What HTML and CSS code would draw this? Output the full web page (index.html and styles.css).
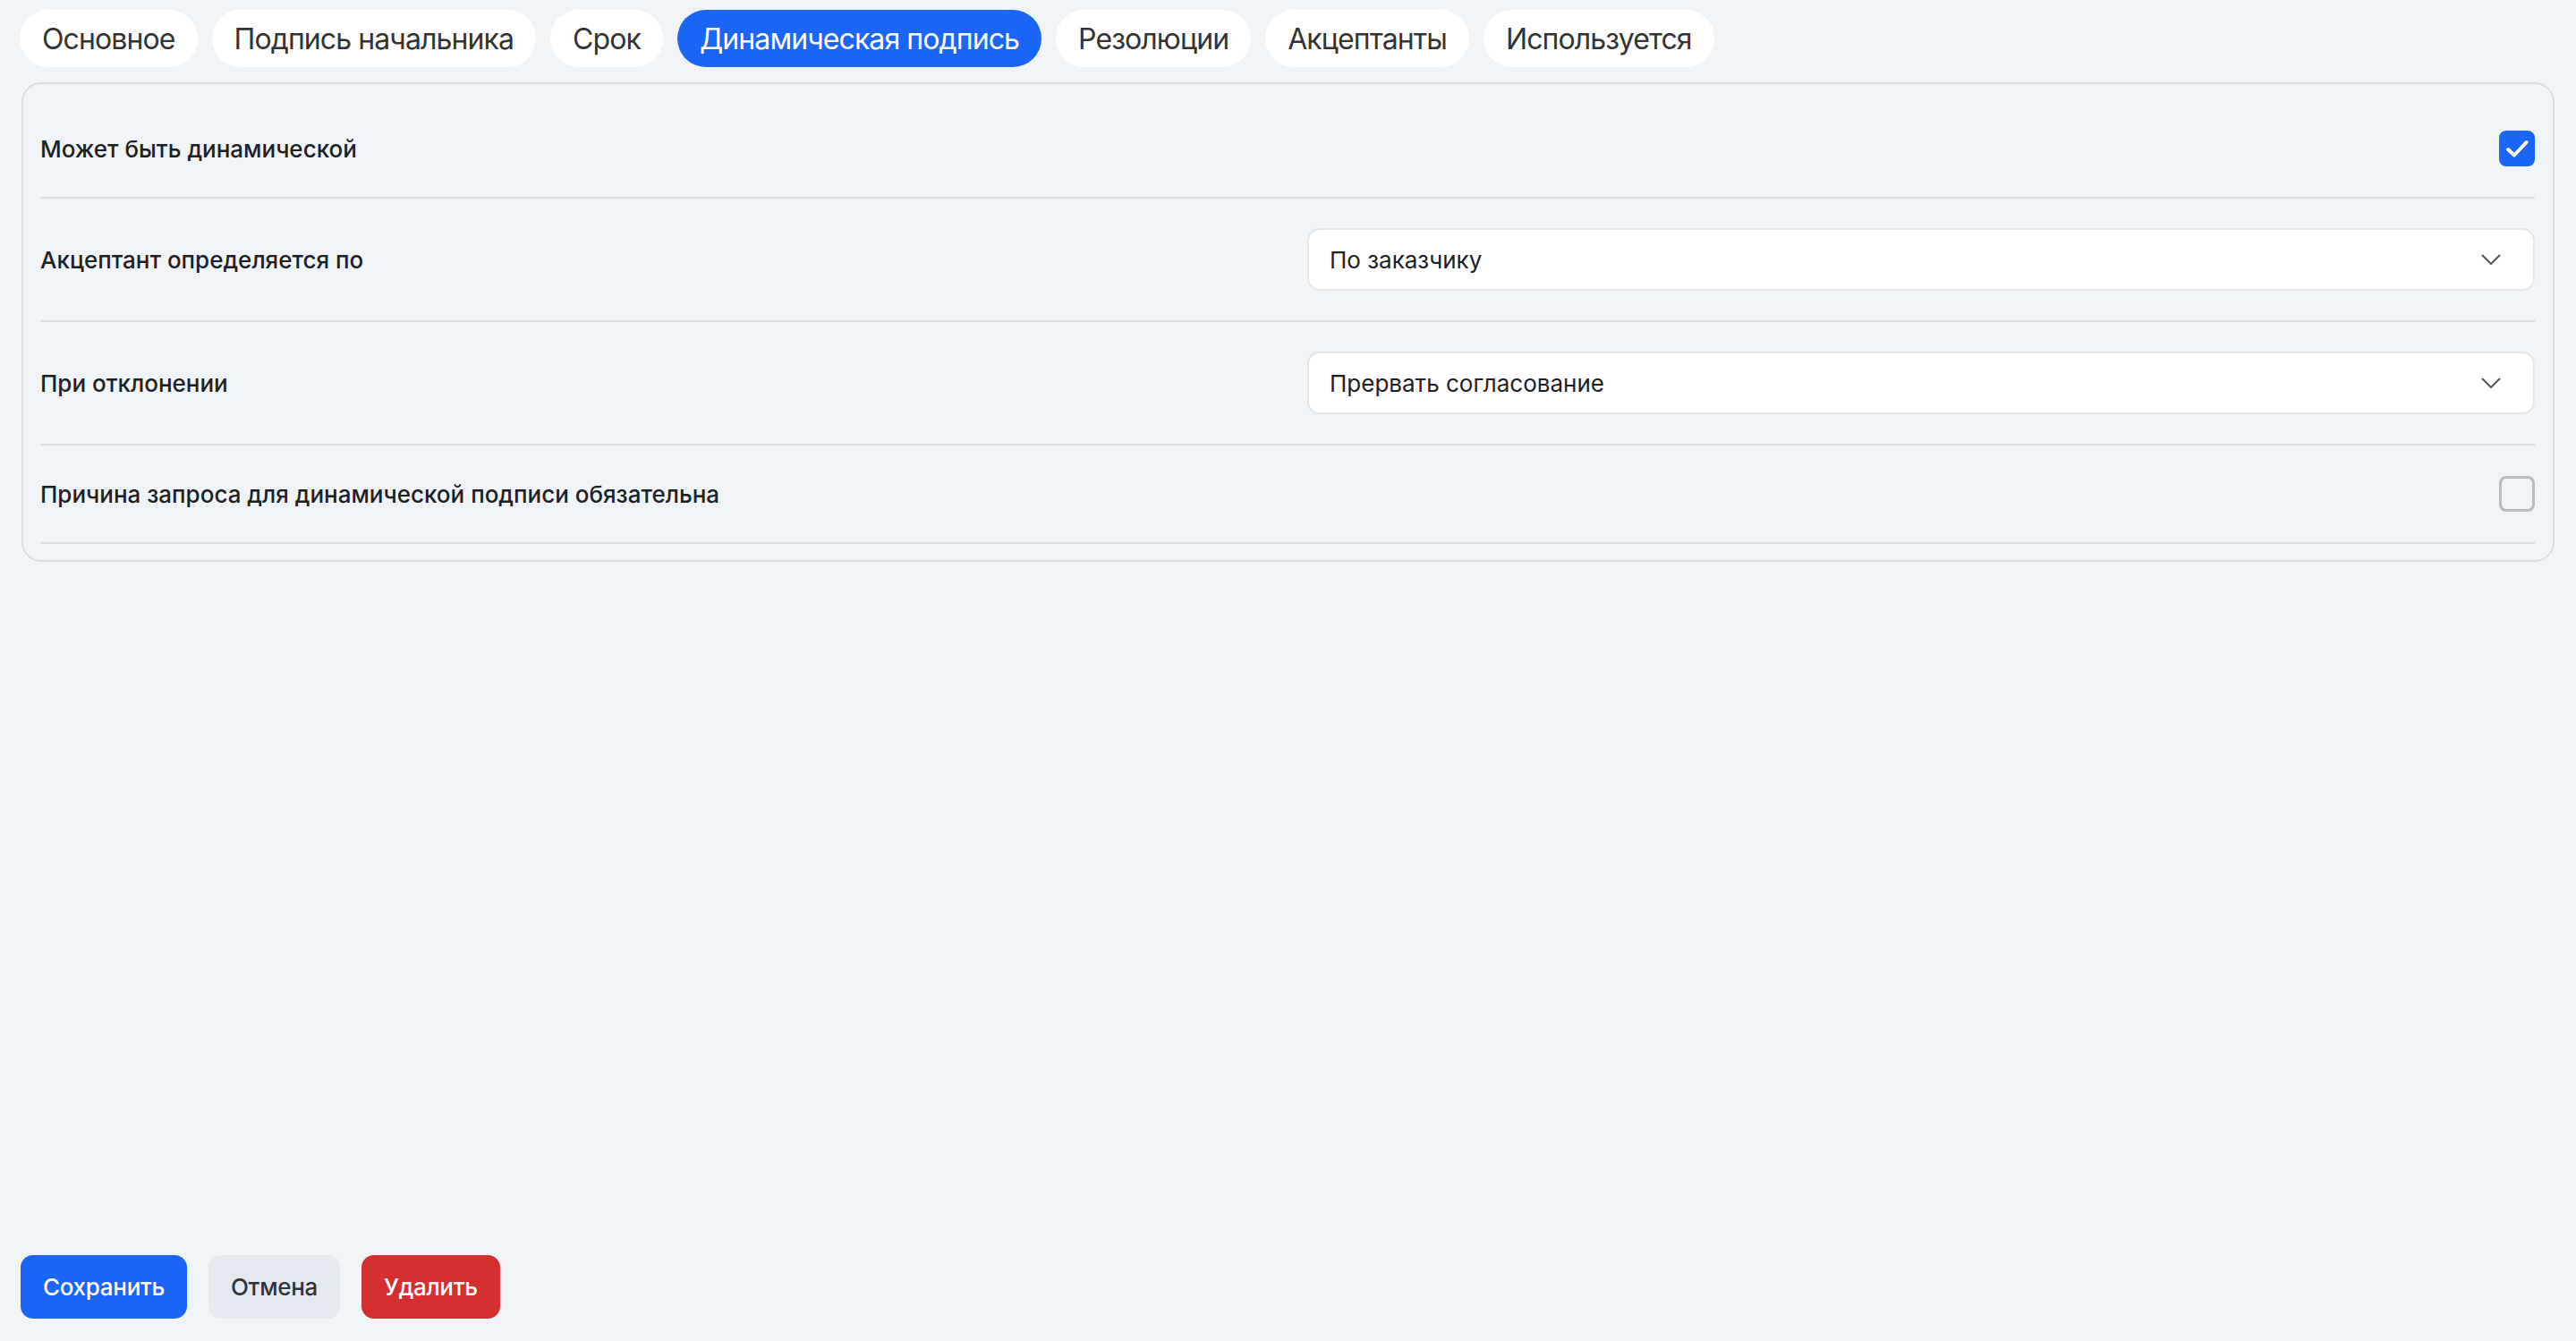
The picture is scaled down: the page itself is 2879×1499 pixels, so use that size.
FILE: index.html
```html
<!DOCTYPE html>
<html lang="ru">
<head>
<meta charset="utf-8">
<title>Динамическая подпись</title>
<link rel="stylesheet" href="styles.css">
</head>
<body>
<div class="page">
  <nav class="tabs">
    <button class="tab">Основное</button>
    <button class="tab">Подпись начальника</button>
    <button class="tab">Срок</button>
    <button class="tab tab--active">Динамическая подпись</button>
    <button class="tab">Резолюции</button>
    <button class="tab">Акцептанты</button>
    <button class="tab">Используется</button>
  </nav>

  <section class="panel">
    <div class="row row--check">
      <span class="label">Может быть динамической</span>
      <span class="checkbox checkbox--on">
        <svg viewBox="0 0 40 40" width="40" height="40"><path d="M10 21l7 6.5L30.5 13" fill="none" stroke="#fff" stroke-width="4" stroke-linecap="round" stroke-linejoin="round"/></svg>
      </span>
    </div>
    <div class="row">
      <span class="label">Акцептант определяется по</span>
      <div class="select">
        <span class="select__value">По заказчику</span>
        <svg class="select__chevron" viewBox="0 0 22 12" width="22" height="12"><path d="M1 1l10 10L21 1" fill="none" stroke="#555" stroke-width="2"/></svg>
      </div>
    </div>
    <div class="row">
      <span class="label">При отклонении</span>
      <div class="select">
        <span class="select__value">Прервать согласование</span>
        <svg class="select__chevron" viewBox="0 0 22 12" width="22" height="12"><path d="M1 1l10 10L21 1" fill="none" stroke="#555" stroke-width="2"/></svg>
      </div>
    </div>
    <div class="row row--check">
      <span class="label">Причина запроса для динамической подписи обязательна</span>
      <span class="checkbox"></span>
    </div>
  </section>

  <footer class="actions">
    <button class="btn btn--primary">Сохранить</button>
    <button class="btn btn--secondary">Отмена</button>
    <button class="btn btn--danger">Удалить</button>
  </footer>
</div>
</body>
</html>
```

FILE: styles.css
```css
* { box-sizing: border-box; }

html, body {
  margin: 0;
  background: #f0f4f7;
  font-family: Inter, "Noto Sans", "Liberation Sans", sans-serif;
  color: #1d2125;
}

.page {
  min-height: 100vh;
  display: flex;
  flex-direction: column;
  padding: 11px 24px 25px 22px;
}

/* tab strip */
.tabs {
  display: flex;
  gap: 16px;
}

.tab {
  height: 64px;
  padding: 0 25px;
  border: 0;
  border-radius: 32px;
  background: #fff;
  color: #333;
  font-family: inherit;
  font-size: 32px;
  letter-spacing: -0.9px;
  font-weight: 400;
  display: flex;
  align-items: center;
  white-space: nowrap;
}

.tab--active {
  background: #1b66f6;
  color: #fff;
}

/* settings panel */
.panel {
  margin-top: 17px;
  margin-left: 2px;
  border: 2px solid #dadee2;
  border-radius: 22px;
  padding: 18px 20px 18px 19px;
}

.row {
  display: grid;
  grid-template-columns: 1fr 1fr;
  column-gap: 44px;
  align-items: center;
  padding: 33px 0;
  border-bottom: 2px solid #dadee2;
}

.row--check {
  grid-template-columns: 1fr auto;
  padding: 34px 0;
}

.label {
  font-size: 26px;
  font-weight: 500;
  color: #1d2125;
}

.checkbox {
  width: 40px;
  height: 40px;
  border-radius: 8px;
  border: 3px solid #b9bcc0;
  display: flex;
  align-items: center;
  justify-content: center;
}

.checkbox--on {
  background: #1b66f6;
  border: 0;
}

.select {
  height: 70px;
  background: #fff;
  border: 2px solid #e4e6e9;
  border-radius: 14px;
  padding: 0 36px 0 23px;
  display: flex;
  align-items: center;
  justify-content: space-between;
}

.select__value {
  font-size: 26px;
  color: #1d2125;
}

/* bottom action bar */
.actions {
  margin-top: auto;
  display: flex;
  gap: 24px;
  margin-left: 1px;
}

.btn {
  height: 71px;
  padding: 0 25px;
  border: 0;
  border-radius: 14px;
  font-family: inherit;
  font-size: 26px;
  letter-spacing: -0.3px;
  font-weight: 500;
}

.btn--primary { background: #1b66f6; color: #fff; }
.btn--secondary { background: #e4e9f0; color: #30343a; }
.btn--danger { background: #d3302f; color: #fff; }
```
